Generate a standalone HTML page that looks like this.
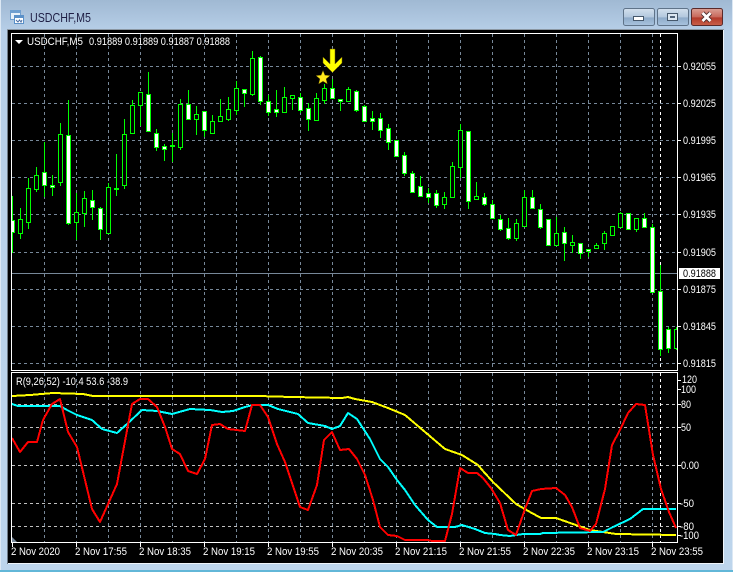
<!DOCTYPE html>
<html><head><meta charset="utf-8"><title>USDCHF,M5</title>
<style>
html,body{margin:0;padding:0;width:733px;height:572px;overflow:hidden;background:#b9d1ea}
svg{display:block}
text{font-family:"Liberation Sans",sans-serif;font-size:11px;fill:#fff}
.r{shape-rendering:crispEdges}
</style></head><body>
<svg width="733" height="572" viewBox="0 0 733 572" xmlns="http://www.w3.org/2000/svg">
<defs>
<linearGradient id="bg" x1="0" y1="0" x2="0" y2="1"><stop offset="0" stop-color="#a0b9d3"/><stop offset="0.055" stop-color="#b7cfe8"/><stop offset="1" stop-color="#bdd5ec"/></linearGradient>
<linearGradient id="btn" x1="0" y1="0" x2="0" y2="1"><stop offset="0" stop-color="#d3e0ee"/><stop offset="0.5" stop-color="#b3c8de"/><stop offset="0.55" stop-color="#8fabc9"/><stop offset="1" stop-color="#a9c4df"/></linearGradient>
<linearGradient id="cls" x1="0" y1="0" x2="0" y2="1"><stop offset="0" stop-color="#dba196"/><stop offset="0.5" stop-color="#c8685a"/><stop offset="0.55" stop-color="#b23a2a"/><stop offset="1" stop-color="#c9604a"/></linearGradient>
<clipPath id="c1"><rect x="12" y="34" width="665" height="336"/></clipPath>
<clipPath id="c2"><rect x="12" y="373" width="665" height="169"/></clipPath>
</defs>
<rect width="733" height="572" fill="url(#bg)"/>
<rect x="0" y="0" width="1" height="572" fill="#dce8f4"/>
<rect x="732" y="0" width="1" height="572" fill="#dce8f4"/>
<rect x="0" y="570" width="733" height="2" fill="#62b7d8"/>
<rect x="7" y="29" width="717" height="1" fill="#8b97a3" class="r"/>
<rect x="7" y="30" width="1" height="534" fill="#6f7b87" class="r"/>
<rect x="8" y="30" width="716" height="533" fill="#000" class="r"/>
<rect x="8" y="563" width="716" height="1" fill="#eef4fa" class="r"/>
<rect x="723" y="30" width="1" height="534" fill="#eef4fa" class="r"/>

<!-- title -->
<g class="r">
<rect x="10.500" y="10.500" width="10" height="9" fill="#e8f1fa" stroke="#6f9fd0"/>
<rect x="11" y="11" width="9" height="2" fill="#6f9fd0"/>
<rect x="14.500" y="15.500" width="9" height="8" fill="#fff" stroke="#5a90c8"/>
<rect x="15" y="16" width="8" height="2" fill="#5a90c8"/>
</g>
<path d="M16 20l2 2 1.500-2 1.500 2 1-2" fill="none" stroke="#4a6fa5" stroke-width="1"/>
<text x="30" y="22" textLength="61" lengthAdjust="spacingAndGlyphs" style="font-size:12.500px;fill:#1f1f45">USDCHF,M5</text>

<!-- buttons -->
<rect x="623.500" y="8.500" width="31" height="17" rx="2" fill="url(#btn)" stroke="#5f7389"/>
<rect x="633.500" y="16.500" width="10" height="4" fill="#fff" stroke="#46586c" class="r"/>
<rect x="657.500" y="8.500" width="31" height="17" rx="2" fill="url(#btn)" stroke="#5f7389"/>
<rect x="667.500" y="13.500" width="10" height="7" fill="#dbe6f1" stroke="#46586c" class="r"/>
<rect x="670" y="16" width="5" height="2" fill="#50637a" class="r"/>
<rect x="691.500" y="8.500" width="31" height="17" rx="2" fill="url(#cls)" stroke="#5a2a2a"/>
<path d="M702.500 13l8 8M710.500 13l-8 8" stroke="#4a2a2a" stroke-width="4.500" fill="none"/>
<path d="M702.500 13l8 8M710.500 13l-8 8" stroke="#fff" stroke-width="2.800" fill="none"/>

<!-- main grid -->
<g clip-path="url(#c1)" class="r">
<path d="M12 66.500H677M12 103.500H677M12 140.500H677M12 177.500H677M12 214.500H677M12 252.500H677M12 289.500H677M12 326.500H677M12 363.500H677" stroke="#778899" stroke-dasharray="3 3" fill="none"/>
<path d="M44.500 34V370M76.500 34V370M108.500 34V370M140.500 34V370M172.500 34V370M204.500 34V370M236.500 34V370M268.500 34V370M300.500 34V370M332.500 34V370M364.500 34V370M396.500 34V370M428.500 34V370M460.500 34V370M492.500 34V370M524.500 34V370M556.500 34V370M588.500 34V370M620.500 34V370M652.500 34V370" stroke="#778899" stroke-dasharray="3 3" fill="none"/>
<path d="M660.500 34V370" stroke="#fff" stroke-dasharray="3 3" fill="none"/>
<rect x="12" y="273" width="665" height="1" fill="#778899"/>
<path stroke="#0f0" fill="none" d="M12.500 196V253M20.500 208V239M28.500 178V229M36.500 167V192M44.500 142V197M52.500 175V196M60.500 123V186M68.500 100V225M76.500 193V240M84.500 191V227M92.500 190V220M100.500 207V240M108.500 183V233M116.500 154V196M124.500 119V189M132.500 100V134M140.500 92V126M148.500 72V132M156.500 129V151M164.500 144V161M172.500 133V162M180.500 99V150M188.500 90V119M196.500 106V135M204.500 111V137M212.500 115V133M220.500 99V122M228.500 97V121M236.500 81V115M244.500 90V107M252.500 51V96M260.500 56V105M268.500 95V116M276.500 90V117M284.500 87V112M292.500 95V110M300.500 93V113M308.500 103V131M316.500 93V120M324.500 84V104M332.500 79V98M340.500 99V111M348.500 87V101M356.500 90V112M364.500 105V121M372.500 111V130M380.500 113V138M388.500 124V150M396.500 140V157M404.500 152V176M412.500 171V193M420.500 176V196M428.500 188V203M436.500 190V208M444.500 192V209M452.500 162V197M460.500 124V178M468.500 131V209M476.500 182V198M484.500 193V206M492.500 200V218M500.500 215V231M508.500 218V240M516.500 219V241M524.500 190V227M532.500 190V208M540.500 204V229M548.500 219V245M556.500 217V245M564.500 227V261M572.500 235V253M580.500 243V259M588.500 249V257M596.500 243V247M604.500 231V250M620.500 212V227M636.500 218V232M644.500 213V227M652.500 224V292M660.500 265V356M668.500 327V353M676.500 327V350"/>
<path stroke="#0f0" fill="#fff" d="M10.500 220.500h4v12h-4zM42.500 172.500h4v13h-4zM50.500 185.500h4v2h-4zM66.500 135.500h4v88h-4zM90.500 200.500h4v7h-4zM98.500 208.500h4v21h-4zM114.500 188.500h4v1h-4zM146.500 94.500h4v37h-4zM154.500 133.500h4v14h-4zM162.500 146.500h4v3h-4zM170.500 145.500h4v1h-4zM186.500 104.500h4v15h-4zM202.500 111.500h4v19h-4zM242.500 89.500h4v4h-4zM258.500 57.500h4v44h-4zM266.500 101.500h4v11h-4zM274.500 109.500h4v3h-4zM298.500 97.500h4v13h-4zM306.500 108.500h4v11h-4zM330.500 88.500h4v10h-4zM338.500 99.500h4v2h-4zM354.500 91.500h4v19h-4zM362.500 106.500h4v15h-4zM370.500 118.500h4v3h-4zM378.500 118.500h4v12h-4zM386.500 128.500h4v14h-4zM394.500 140.500h4v16h-4zM402.500 155.500h4v18h-4zM410.500 173.500h4v19h-4zM418.500 186.500h4v10h-4zM426.500 193.500h4v4h-4zM434.500 193.500h4v12h-4zM466.500 131.500h4v70h-4zM482.500 197.500h4v7h-4zM490.500 204.500h4v14h-4zM498.500 219.500h4v10h-4zM506.500 228.500h4v10h-4zM530.500 197.500h4v11h-4zM538.500 209.500h4v18h-4zM546.500 219.500h4v26h-4zM562.500 232.500h4v11h-4zM578.500 243.500h4v10h-4zM586.500 249.500h4v2h-4zM626.500 213.500h4v16h-4zM642.500 218.500h4v9h-4zM650.500 227.500h4v65h-4zM658.500 291.500h4v58h-4zM666.500 329.500h4v19h-4z"/>
<path stroke="#0f0" fill="#000" d="M18.500 219.500h4v14h-4zM26.500 188.500h4v34h-4zM34.500 175.500h4v14h-4zM58.500 134.500h4v48h-4zM74.500 212.500h4v10h-4zM82.500 198.500h4v15h-4zM106.500 187.500h4v46h-4zM122.500 134.500h4v51h-4zM130.500 105.500h4v28h-4zM138.500 92.500h4v13h-4zM178.500 104.500h4v43h-4zM194.500 114.500h4v5h-4zM210.500 121.500h4v12h-4zM218.500 116.500h4v5h-4zM226.500 109.500h4v10h-4zM234.500 88.500h4v22h-4zM250.500 58.500h4v36h-4zM282.500 97.500h4v15h-4zM290.500 95.500h4v3h-4zM314.500 98.500h4v22h-4zM322.500 88.500h4v12h-4zM346.500 89.500h4v12h-4zM442.500 197.500h4v7h-4zM450.500 166.500h4v31h-4zM458.500 130.500h4v37h-4zM474.500 196.500h4v3h-4zM514.500 223.500h4v15h-4zM522.500 197.500h4v29h-4zM554.500 233.500h4v12h-4zM570.500 242.500h4v3h-4zM594.500 245.500h4v3h-4zM602.500 233.500h4v10h-4zM610.500 226.500h4v9h-4zM618.500 213.500h4v14h-4zM634.500 218.500h4v11h-4zM674.500 329.500h4v19h-4z"/>
</g>

<!-- arrow and star -->
<path d="M330 49h5v15l7-7v6l-9.500 9.500L323 63v-6l7 7z" fill="#ff0" stroke="#6b5a00" stroke-width="0.500"/>
<path d="M323 70.500l1.900 4.700 5.100.4-3.900 3.300 1.200 5-4.300-2.700-4.300 2.700 1.200-5-3.900-3.300 5.100-.4z" fill="#ffe81a" stroke="#6b5a00" stroke-width="0.400"/>

<!-- indicator grid -->
<g class="r" clip-path="url(#c2)">
<path d="M12 404.500H677M12 427.500H677M12 465.500H677M12 503.500H677M12 526.500H677" stroke="#c0c0c0" stroke-dasharray="3 3" fill="none"/>
<path d="M44.500 373V542M76.500 373V542M108.500 373V542M140.500 373V542M172.500 373V542M204.500 373V542M236.500 373V542M268.500 373V542M300.500 373V542M332.500 373V542M364.500 373V542M396.500 373V542M428.500 373V542M460.500 373V542M492.500 373V542M524.500 373V542M556.500 373V542M588.500 373V542M620.500 373V542M652.500 373V542" stroke="#778899" stroke-dasharray="3 3" fill="none"/>
<path d="M660.500 373V542" stroke="#fff" stroke-dasharray="3 3" fill="none"/>
</g>
<g clip-path="url(#c2)" fill="none" stroke-width="2" stroke-linejoin="round" shape-rendering="crispEdges">
<polyline stroke="#ff0" points="12,396 30,395 53,393 83,394 93,396 258,396 292,397 342,398 348,397 355,399 372,402 388,408 405,415 425,432 445,449 462,455 478,465 483,471 493,482 516,504 530,512 541,518 556,518 573,524 590,530 616,534 676,535"/>
<polyline stroke="#0ff" points="12,404 18,406 60,406 67,410 77,415 92,420 102,429 117,433 127,424 142,410 157,411 172,414 190,409 210,410 222,412 233,411 245,407 253,405 268,405 278,409 298,414 308,423 325,426 332,429 340,426 348,413 357,419 370,439 380,459 388,467 397,480 405,490 415,505 428,520 437,527 455,527 462,525 475,529 485,533 495,534 500,535 510,536 523,534 540,534 543,533 603,532 613,527 630,519 643,509 676,509"/>
<polyline stroke="#f00" points="12,438 20,452 28,442 37,442 43,420 52,404 60,399 68,432 77,447 92,509 100,522 117,484 128,425 132,404 140,399 148,399 157,407 165,427 172,449 180,454 188,471 197,474 205,459 212,425 220,424 228,429 245,431 252,405 260,405 268,417 277,444 285,462 300,507 308,510 317,485 324,440 332,432 340,450 349,449 357,459 365,475 373,500 380,527 388,535 397,536 405,540 428,540 432,541 445,541 452,514 460,468 468,473 477,473 483,478 491,488 500,503 508,530 516,535 525,509 532,491 541,489 556,488 565,495 572,507 580,528 590,531 596,524 605,489 612,445 620,430 628,413 636,404 645,405 653,455 661,489 669,512 676,528"/>
</g>

<!-- frames -->
<g fill="#fff" class="r">
<rect x="11" y="33" width="667" height="1"/>
<rect x="11" y="33" width="1" height="338"/>
<rect x="677" y="33" width="1" height="338"/>
<rect x="11" y="370" width="667" height="1"/>
<rect x="11" y="372" width="667" height="1"/>
<rect x="11" y="372" width="1" height="171"/>
<rect x="677" y="372" width="1" height="171"/>
<rect x="11" y="542" width="667" height="1"/>
</g>
<path d="M12 537l5 5h-5z" fill="#778899"/>

<!-- right ticks -->
<path class="r" stroke="#fff" fill="none" d="M678 66.500h3M678 103.500h3M678 140.500h3M678 177.500h3M678 214.500h3M678 252.500h3M678 289.500h3M678 326.500h3M678 363.500h3M678 380.500h3M678 389.500h3M678 404.500h3M678 427.500h3M678 465.500h3M678 503.500h3M678 526.500h3M678 535.500h3"/>
<!-- bottom ticks -->
<path class="r" stroke="#fff" fill="none" d="M12.500 543v4M76.500 543v4M140.500 543v4M204.500 543v4M268.500 543v4M332.500 543v4M396.500 543v4M460.500 543v4M524.500 543v4M588.500 543v4M652.500 543v4"/>

<!-- header text -->
<path d="M15 40h8l-4 4z" fill="#fff"/>
<text x="27" y="45" textLength="56" lengthAdjust="spacingAndGlyphs">USDCHF,M5</text>
<text x="89" y="45" textLength="141" lengthAdjust="spacingAndGlyphs">0.91889 0.91889 0.91887 0.91888</text>
<text x="16" y="385" textLength="112" lengthAdjust="spacingAndGlyphs">R(9,26,52) -10.4 53.6 -38.9</text>

<!-- price axis -->
<g>
<text x="683" y="70" textLength="33" lengthAdjust="spacingAndGlyphs">0.92055</text>
<text x="683" y="107" textLength="33" lengthAdjust="spacingAndGlyphs">0.92025</text>
<text x="683" y="144" textLength="33" lengthAdjust="spacingAndGlyphs">0.91995</text>
<text x="683" y="181" textLength="33" lengthAdjust="spacingAndGlyphs">0.91965</text>
<text x="683" y="218" textLength="33" lengthAdjust="spacingAndGlyphs">0.91935</text>
<text x="683" y="256" textLength="33" lengthAdjust="spacingAndGlyphs">0.91905</text>
<text x="683" y="293" textLength="33" lengthAdjust="spacingAndGlyphs">0.91875</text>
<text x="683" y="330" textLength="33" lengthAdjust="spacingAndGlyphs">0.91845</text>
<text x="683" y="367" textLength="33" lengthAdjust="spacingAndGlyphs">0.91815</text>
</g>
<rect x="679" y="268" width="41" height="11" fill="#fff" class="r"/>
<text x="683" y="277" textLength="33" lengthAdjust="spacingAndGlyphs" style="fill:#000">0.91888</text>

<!-- indicator axis -->
<text x="682" y="383" textLength="15" lengthAdjust="spacingAndGlyphs">120</text>
<text x="681" y="393" textLength="15" lengthAdjust="spacingAndGlyphs">100</text>
<text x="681" y="408" textLength="10" lengthAdjust="spacingAndGlyphs">80</text>
<text x="681" y="431" textLength="10" lengthAdjust="spacingAndGlyphs">50</text>
<text x="681" y="469" textLength="18" lengthAdjust="spacingAndGlyphs">0.00</text>
<text x="680" y="507" textLength="14" lengthAdjust="spacingAndGlyphs">-50</text>
<text x="680" y="530" textLength="14" lengthAdjust="spacingAndGlyphs">-80</text>
<text x="680" y="539" textLength="19" lengthAdjust="spacingAndGlyphs">-100</text>

<!-- time axis -->
<text x="11" y="555" textLength="49" lengthAdjust="spacingAndGlyphs">2 Nov 2020</text>
<text x="75" y="555" textLength="52" lengthAdjust="spacingAndGlyphs">2 Nov 17:55</text>
<text x="139" y="555" textLength="52" lengthAdjust="spacingAndGlyphs">2 Nov 18:35</text>
<text x="203" y="555" textLength="52" lengthAdjust="spacingAndGlyphs">2 Nov 19:15</text>
<text x="267" y="555" textLength="52" lengthAdjust="spacingAndGlyphs">2 Nov 19:55</text>
<text x="331" y="555" textLength="52" lengthAdjust="spacingAndGlyphs">2 Nov 20:35</text>
<text x="395" y="555" textLength="52" lengthAdjust="spacingAndGlyphs">2 Nov 21:15</text>
<text x="459" y="555" textLength="52" lengthAdjust="spacingAndGlyphs">2 Nov 21:55</text>
<text x="523" y="555" textLength="52" lengthAdjust="spacingAndGlyphs">2 Nov 22:35</text>
<text x="587" y="555" textLength="52" lengthAdjust="spacingAndGlyphs">2 Nov 23:15</text>
<text x="651" y="555" textLength="52" lengthAdjust="spacingAndGlyphs">2 Nov 23:55</text>
</svg>
</body></html>
